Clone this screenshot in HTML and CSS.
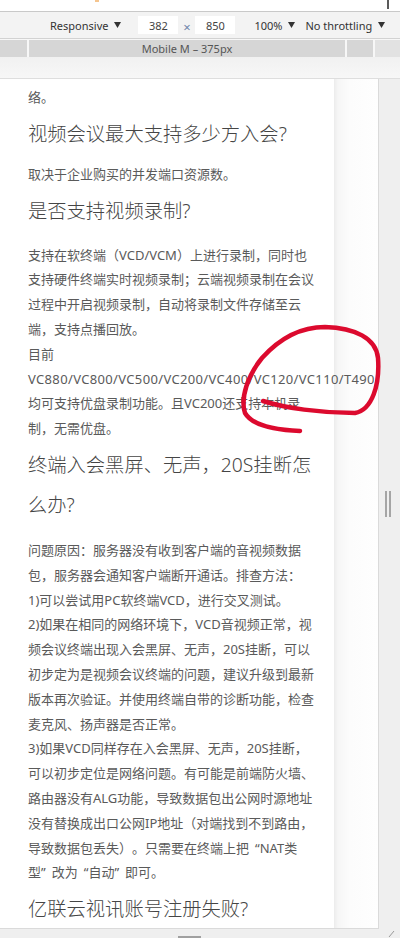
FILE: index.html
```html
<!DOCTYPE html>
<html lang="zh-CN">
<head>
<meta charset="utf-8">
<title>FAQ - Mobile M</title>
<link rel="stylesheet" href="styles.css">
</head>
<body>
<div class="devtools">
  <div class="titlebar"><span class="tb-mark-left"></span><span class="tb-mark-right"></span></div>
  <div class="toolbar">
    <div class="tool"><span>Responsive</span><svg class="caret" viewBox="0 0 7 6"><path d="M0 0H7L3.5 6Z"/></svg></div>
    <div class="tool tool-size"><span class="dim-input">382</span><span class="times">×</span><span class="dim-input">850</span></div>
    <div class="tool tool-zoom"><span>100%</span><svg class="caret" viewBox="0 0 7 6"><path d="M0 0H7L3.5 6Z"/></svg></div>
    <div class="tool tool-throttle"><span>No throttling</span><svg class="caret" viewBox="0 0 7 6"><path d="M0 0H7L3.5 6Z"/></svg></div>
  </div>
  <div class="mq-bar">
    <div class="mq mq-s"></div>
    <div class="mq mq-m">Mobile M – 375px</div>
    <div class="mq mq-l"></div>
    <div class="mq mq-t"></div>
  </div>
  <div class="ruler-space"></div>
  <div class="stage">
    <div class="viewport">
      <article class="faq">
        <p class="answer answer-tail">络。</p>
        <h2 class="question">视频会议最大支持多少方入会?</h2>
        <p class="answer answer-short">取决于企业购买的并发端口资源数。</p>
        <h2 class="question">是否支持视频录制?</h2>
        <p class="answer">支持在软终端（VCD/VCM）上进行录制，同时也支持硬件终端实时视频录制；云端视频录制在会议过程中开启视频录制，自动将录制文件存储至云端，支持点播回放。<br>目前<span class="model-list">VC880/VC800/VC500/VC200/VC400/VC120/VC110/T490</span>均可支持优盘录制功能。且VC200还支持本机录制，无需优盘。</p>
        <h2 class="question">终端入会黑屏、无声，20S挂断怎么办?</h2>
        <p class="answer answer-long">问题原因：服务器没有收到客户端的音视频数据包，服务器会通知客户端断开通话。排查方法：<br>1)可以尝试用PC软终端VCD，进行交叉测试。<br>2)如果在相同的网络环境下，VCD音视频正常，视频会议终端出现入会黑屏、无声，20S挂断，可以初步定为是视频会议终端的问题，建议升级到最新版本再次验证。并使用终端自带的诊断功能，检查麦克风、扬声器是否正常。<br>3)如果VCD同样存在入会黑屏、无声，20S挂断，可以初步定位是网络问题。有可能是前端防火墙、路由器没有ALG功能，导致数据包出公网时源地址没有替换成出口公网IP地址（对端找到不到路由，导致数据包丢失）。只需要在终端上把<span class="q-open">“</span>NAT类型<span class="q-close">”</span>改为<span class="q-open">“</span>自动<span class="q-close">”</span>即可。</p>
        <h2 class="question">亿联云视讯账号注册失败?</h2>
      </article>
    </div>
    <div class="side-handle"><span></span><span></span></div>
  </div>
  <div class="bottom-bar">
    <div class="bottom-center"><span class="bottom-handle"></span></div>
    <svg class="corner" viewBox="0 0 8 8"><path d="M7 1L2 7"/></svg>
  </div>
</div>
<svg class="annotation" viewBox="0 0 400 938" width="400" height="938">
  <path d="M263,401 C285,408 320,413 355,413 C372,410 380,385 378,358 C376,338 355,328 325,327 C300,327 280,338 262,358 C248,375 240,398 245,413 C252,425 275,430 300,431"/>
</svg>
</body>
</html>
```

FILE: styles.css
```css
html, body {
  margin: 0;
  padding: 0;
}

body {
  width: 400px;
  height: 938px;
  overflow: hidden;
  position: relative;
  background: #efefef;
  font-family: "Noto Sans", "Noto Sans CJK SC", sans-serif;
}

.titlebar {
  height: 11px;
  background: #fff;
  border-bottom: 1px solid #c9c9c9;
  display: flex;
  align-items: flex-start;
}

.tb-mark-left {
  width: 4px;
  height: 2px;
  margin-left: 95px;
  background: #f5c58f;
}

.tb-mark-right {
  width: 2px;
  height: 9px;
  margin-left: auto;
  margin-right: 11px;
  background: #5a5a5a;
}

.toolbar {
  height: 26px;
  background: #f3f3f3;
  border-bottom: 1px solid #d2d2d2;
  display: flex;
  align-items: center;
  padding-left: 50px;
  font-size: 11px;
  color: #333;
}

.tool {
  display: flex;
  align-items: center;
  gap: 6px;
}

.tool-size {
  margin-left: 17px;
  gap: 0;
}

.tool-zoom {
  margin-left: 19px;
}

.tool-throttle {
  margin-left: 10px;
}

.caret {
  width: 7px;
  height: 6px;
  fill: #333;
}

.dim-input {
  width: 40px;
  height: 18px;
  background: #fff;
  display: flex;
  align-items: center;
  justify-content: center;
  color: #444;
}

.times {
  width: 17px;
  text-align: center;
  color: #6f86aa;
  font-size: 13px;
  padding-top: 3px;
}

.mq-bar {
  height: 17px;
  padding-top: 1px;
  background: #f7f7f7;
  display: flex;
  gap: 2px;
}

.mq {
  height: 17px;
  background: #d6d6d6;
  font-size: 11px;
  color: #555;
  display: flex;
  align-items: center;
  justify-content: center;
}

.mq-s { width: 27px; }
.mq-m { width: 316px; }
.mq-l { width: 26px; }
.mq-t { flex: 1; background: #e2e2e2; }

.ruler-space {
  height: 21px;
  background: linear-gradient(#f1f1f1, #f7f7f7);
  border-bottom: 1px solid #dedede;
}

.stage {
  display: flex;
  height: 850px;
}

.viewport {
  box-sizing: border-box;
  width: 379px;
  height: 850px;
  padding: 6px 0 0 28px;
  overflow: hidden;
  border-right: 1px solid #dadada;
  border-bottom: 1px solid #dadada;
  background: linear-gradient(to right, #fff 334px, #ececec 334px, #f6f6f6 338px, #fcfcfc 350px, #fefefe 378px);
}

.faq {
  width: 289px;
  color: #5a5a5a;
  font-size: 13px;
  line-height: 24.8px;
  text-autospace: no-autospace;
  text-spacing-trim: space-all;
}

.answer {
  margin: 12px 0 0;
}

.answer-tail {
  margin-top: 0;
}

.answer-short {
  margin-top: 8px;
}

.answer-long {
  margin-top: 13px;
}

.question {
  margin: 4px 0 0;
  font-size: 19.3px;
  line-height: 40px;
  font-weight: 300;
  color: #454545;
}

.q-open {
  padding-left: 6px;
}

.q-close {
  padding-right: 6px;
}

.model-list {
  letter-spacing: 0.35px;
}

.side-handle {
  flex: 1;
  display: flex;
  align-items: center;
  gap: 2px;
  padding-left: 6px;
}

.side-handle span {
  width: 2px;
  height: 26px;
  background: #a5a5a5;
}

.bottom-bar {
  height: 9px;
  display: flex;
}

.bottom-center {
  width: 379px;
  display: flex;
  justify-content: center;
  align-items: flex-end;
}

.bottom-handle {
  width: 23px;
  height: 2px;
  background: #a0a0a0;
}

.corner {
  width: 8px;
  height: 8px;
  margin-left: 8px;
  margin-top: 1px;
  fill: none;
  stroke: #9a9a9a;
  stroke-width: 1;
}

.annotation {
  position: absolute;
  top: 0;
  left: 0;
  pointer-events: none;
}

.annotation path {
  fill: none;
  stroke: #dc0a2e;
  stroke-width: 4.5;
  stroke-linecap: round;
  stroke-linejoin: round;
}
```
